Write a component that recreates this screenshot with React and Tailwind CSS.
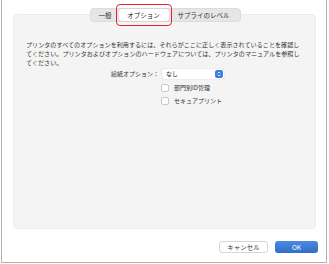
import React from 'react';

const jp = { fontFamily: '"Noto Sans CJK JP", "Noto Sans", sans-serif' };

function Checkbox({ label }) {
    return (
        <div className="flex items-center gap-[5px] h-[8px]">
            <div className="w-[8px] h-[8px] rounded-[2px] border border-[#c8c8c8] bg-white"></div>
            <span className="text-[6px] leading-none text-[#333]">{label}</span>
        </div>
    );
}

export default function App() {
    return (
        <div className="w-[329px] h-[264px] bg-white pl-[1px]" style={jp}>
            <div className="w-[326px] h-[263px] border-l border-r border-b border-[#b3b3b3] flex flex-col">
                <div className="flex justify-center mt-[8px] relative z-10 pl-[2px]">
                    <div className="flex h-[14px] rounded-[4px] bg-[#e6e6e6] border border-[#dcdcdc] items-center px-[1px]">
                        <div className="w-[27px] text-center text-[6.5px] text-[#333] leading-none">一般</div>
                        <div className="relative">
                            <div className="w-[50px] h-[12px] flex items-center justify-center rounded-[3px] bg-white text-[6.5px] text-[#222] leading-none shadow-[0_0_1px_rgba(0,0,0,0.3)]">オプション</div>
                            <div className="absolute -left-[3px] -top-[5px] w-[56px] h-[22px] rounded-[4px] border-[1.5px] border-[#e4242c]"></div>
                        </div>
                        <div className="w-[70px] text-center text-[6.5px] text-[#333] leading-none">サプライのレベル</div>
                    </div>
                </div>
                <div className="ml-[11px] w-[303px] h-[215px] -mt-[8px] rounded-[4px] bg-[#f4f4f4] border border-[#ececec] flex flex-col">
                    <p className="mt-[25px] ml-[12px] text-[6.1px] leading-[9px] text-[#333]">
                        プリンタのすべてのオプションを利用するには、それらがここに正しく表示されていることを確認し<br />
                        てください。プリンタおよびオプションのハードウェアについては、プリンタのマニュアルを参照し<br />
                        てください。
                    </p>
                    <div className="flex items-center mt-[2px] h-[10px]">
                        <div className="w-[145px] text-right text-[6px] text-[#333] leading-none">給紙オプション：</div>
                        <div className="ml-[3px] w-[62px] h-[10px] rounded-[2px] bg-white shadow-[0_0_1px_rgba(0,0,0,0.35)] flex items-center justify-between pl-[4px] pr-[1px]">
                            <span className="text-[6px] text-[#222] leading-none">なし</span>
                            <div className="w-[8px] h-[8px] rounded-[2px] bg-[#3f7fdc] flex items-center justify-center">
                                <svg width="4" height="6" viewBox="0 0 4 6">
                                    <path d="M0.8 2.2 L2 1 L3.2 2.2 M0.8 3.8 L2 5 L3.2 3.8" stroke="white" strokeWidth="0.8" fill="none" />
                                </svg>
                            </div>
                        </div>
                    </div>
                    <div className="ml-[147px] mt-[5px] flex flex-col gap-[5px]">
                        <Checkbox label="部門別ID管理" />
                        <Checkbox label="セキュアプリント" />
                    </div>
                </div>
                <div className="flex justify-end gap-[7px] mt-[12px] pr-[8px]">
                    <button className="w-[49px] h-[12px] rounded-[3px] bg-white border border-[#d6d6d6] text-[6.5px] text-[#333] leading-none">キャンセル</button>
                    <button className="w-[43px] h-[12px] rounded-[3px] bg-gradient-to-b from-[#4b8ae0] to-[#2f6fc6] text-[6.5px] text-white leading-none">OK</button>
                </div>
            </div>
        </div>
    );
}
